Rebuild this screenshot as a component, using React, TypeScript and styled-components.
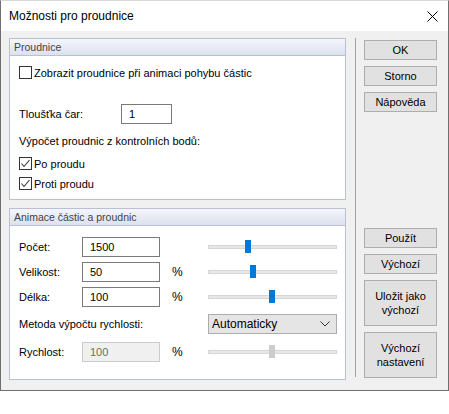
import React from "react";
import styled, { createGlobalStyle } from "styled-components";

const GlobalStyle = createGlobalStyle`
  html, body { margin: 0; padding: 0; background: #ffffff; }
  body { font-family: "Liberation Sans", Arial, sans-serif; font-size: 11px; color: #000; }
  * { box-sizing: border-box; }
`;

const Window = styled.div`
  width: 449px;
  height: 391px;
  border: 1px solid #6f6f6f;
  border-top-color: #d9d9d9;
  display: flex;
  flex-direction: column;
  background: #f0f0f0;
`;

const TitleBar = styled.div`
  height: 30px;
  background: #ffffff;
  display: flex;
  align-items: center;
  justify-content: space-between;
  padding: 0 9px 0 8px;
  font-size: 12px;
  color: #000;
`;

const CloseButton = styled.div`
  width: 12px;
  height: 12px;
  display: flex;
  align-items: center;
  justify-content: center;
  margin-right: 1px;
`;

const Body = styled.div`
  flex: 1;
  display: flex;
  padding: 7px 0 10px 8px;
`;

const LeftColumn = styled.div`
  width: 337px;
  display: flex;
  flex-direction: column;
  gap: 8px;
`;

const Separator = styled.div`
  width: 1px;
  background: #a0a0a0;
  margin: 0 8px 3px 9px;
`;

const RightColumn = styled.div`
  width: 73px;
  display: flex;
  flex-direction: column;
  gap: 6px;
  padding: 2px 0;
`;

const Spacer = styled.div`
  flex: 1;
`;

const Button = styled.div<{ $tall?: boolean }>`
  height: ${(p) => (p.$tall ? 46 : 20)}px;
  background: #e1e1e1;
  border: 1px solid #adadad;
  display: flex;
  align-items: center;
  justify-content: center;
  text-align: center;
  font-size: 11px;
  line-height: 14px;
  color: #000;
`;

const Group = styled.div<{ $grow?: boolean }>`
  border: 1px solid #b9c0d5;
  background: #ffffff;
  display: flex;
  flex-direction: column;
  ${(p) => (p.$grow ? "flex: 1;" : "")}
`;

const GroupHeader = styled.div`
  height: 17px;
  border-bottom: 1px solid #b9c0d5;
  background: linear-gradient(to bottom, #f5f7fc 0%, #e8ebf4 50%, #dce1ee 100%);
  padding-left: 4px;
  display: flex;
  align-items: center;
  color: #444444;
  font-size: 10.5px;
`;

const GroupBody = styled.div<{ $bottom: number }>`
  padding: 0 8px ${(p) => p.$bottom}px 9px;
  display: flex;
  flex-direction: column;
`;

const Row = styled.div<{ $top: number; $h: number }>`
  margin-top: ${(p) => p.$top}px;
  height: ${(p) => p.$h}px;
  display: flex;
  align-items: center;
`;

const GridRow = styled.div<{ $top: number }>`
  margin-top: ${(p) => p.$top}px;
  height: 20px;
  display: grid;
  grid-template-columns: 63px 78px 48px 129px;
  align-items: center;
`;

const Label = styled.span<{ $span?: number; $w?: number }>`
  white-space: nowrap;
  ${(p) => (p.$span ? `grid-column: span ${p.$span};` : "")}
  ${(p) => (p.$w ? `width: ${p.$w}px;` : "")}
`;

const Percent = styled.span`
  padding-left: 12px;
  font-size: 12px;
`;

const TextBox = styled.div<{ $w?: number; $disabled?: boolean }>`
  width: ${(p) => (p.$w ? `${p.$w}px` : "100%")};
  height: 20px;
  border: 1px solid ${(p) => (p.$disabled ? "#cccccc" : "#7a7a7a")};
  background: ${(p) => (p.$disabled ? "#f0f0f0" : "#ffffff")};
  color: ${(p) => (p.$disabled ? "#6d6d6d" : "#000")};
  padding-left: 7px;
  display: flex;
  align-items: center;
`;

const CheckBoxBox = styled.div`
  width: 13px;
  height: 13px;
  border: 1px solid #333333;
  background: #ffffff;
  margin-right: 2px;
  flex-shrink: 0;
  display: flex;
  align-items: center;
  justify-content: center;
`;

const Track = styled.div`
  position: relative;
  width: 129px;
  height: 4px;
  background: #e7e7e7;
  border: 1px solid #d6d6d6;
`;

const Thumb = styled.div<{ $disabled?: boolean }>`
  position: absolute;
  top: -6px;
  width: 6px;
  height: 13px;
  background: ${(p) => (p.$disabled ? "#cccccc" : "#0078d7")};
`;

const Select = styled.div`
  width: 129px;
  height: 20px;
  background: #e5e5e5;
  border: 1px solid #adadad;
  display: flex;
  align-items: center;
  justify-content: space-between;
  padding: 0 6px 0 3px;
  font-size: 12px;
`;

const CheckBox: React.FC<{ checked?: boolean; label: string }> = ({ checked, label }) => (
  <>
    <CheckBoxBox>
      {checked && (
        <svg width="11" height="11" viewBox="0 0 11 11">
          <path d="M1.5 5.5 L4 8.5 L9.5 2" fill="none" stroke="#333" strokeWidth="1.1" />
        </svg>
      )}
    </CheckBoxBox>
    <span>{label}</span>
  </>
);

const Slider: React.FC<{ offset: number; disabled?: boolean }> = ({ offset, disabled }) => (
  <Track>
    <Thumb $disabled={disabled} style={{ left: `${offset - 1}px` }} />
  </Track>
);

export default function App() {
  return (
    <>
      <GlobalStyle />
      <Window>
        <TitleBar>
          <span>Možnosti pro proudnice</span>
          <CloseButton>
            <svg width="11" height="11" viewBox="0 0 11 11">
              <path d="M0.5 0.5 L10.5 10.5 M10.5 0.5 L0.5 10.5" stroke="#000" strokeWidth="1" />
            </svg>
          </CloseButton>
        </TitleBar>
        <Body>
          <LeftColumn>
            <Group>
              <GroupHeader>Proudnice</GroupHeader>
              <GroupBody $bottom={8}>
                <Row $top={9} $h={15}>
                  <CheckBox label="Zobrazit proudnice při animaci pohybu částic" />
                </Row>
                <Row $top={24} $h={20}>
                  <Label $w={102}>Tloušťka čar:</Label>
                  <TextBox $w={51}>1</TextBox>
                </Row>
                <Row $top={9} $h={16}>
                  <Label>Výpočet proudnic z kontrolních bodů:</Label>
                </Row>
                <Row $top={7} $h={15}>
                  <CheckBox checked label="Po proudu" />
                </Row>
                <Row $top={5} $h={15}>
                  <CheckBox checked label="Proti proudu" />
                </Row>
              </GroupBody>
            </Group>
            <Group $grow>
              <GroupHeader>Animace částic a proudnic</GroupHeader>
              <GroupBody $bottom={0}>
                <GridRow $top={11}>
                  <Label>Počet:</Label>
                  <TextBox>1500</TextBox>
                  <span />
                  <Slider offset={37} />
                </GridRow>
                <GridRow $top={5}>
                  <Label>Velikost:</Label>
                  <TextBox>50</TextBox>
                  <Percent>%</Percent>
                  <Slider offset={42} />
                </GridRow>
                <GridRow $top={5}>
                  <Label>Délka:</Label>
                  <TextBox>100</TextBox>
                  <Percent>%</Percent>
                  <Slider offset={61} />
                </GridRow>
                <GridRow $top={7}>
                  <Label $span={3}>Metoda výpočtu rychlosti:</Label>
                  <Select>
                    <span>Automaticky</span>
                    <svg width="10" height="6" viewBox="0 0 10 6">
                      <path d="M0.5 0.5 L5 5 L9.5 0.5" fill="none" stroke="#333" strokeWidth="1" />
                    </svg>
                  </Select>
                </GridRow>
                <GridRow $top={8}>
                  <Label>Rychlost:</Label>
                  <TextBox $disabled>100</TextBox>
                  <Percent>%</Percent>
                  <Slider offset={61} disabled />
                </GridRow>
              </GroupBody>
            </Group>
          </LeftColumn>
          <Separator />
          <RightColumn>
            <Button>OK</Button>
            <Button>Storno</Button>
            <Button>Nápověda</Button>
            <Spacer />
            <Button>Použít</Button>
            <Button>Výchozí</Button>
            <Button $tall>
              Uložit jako
              <br />
              výchozí
            </Button>
            <Button $tall>
              Výchozí
              <br />
              nastavení
            </Button>
          </RightColumn>
        </Body>
      </Window>
    </>
  );
}
